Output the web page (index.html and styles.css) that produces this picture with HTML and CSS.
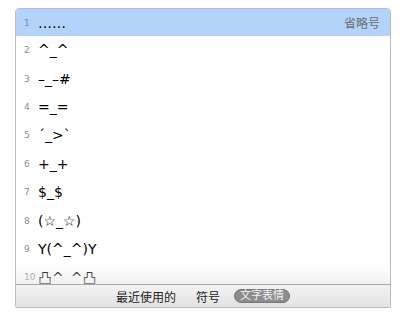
FILE: index.html
```html
<!DOCTYPE html>
<html>

<head>
  <title>文字表情</title>
  <link rel="stylesheet" href="styles.css">
</head>

<body>
  <div class="panel">
    <!-- emoticon list -->
    <ul class="list">
      <li class="row selected"><span class="num">1</span><span class="face">……</span><span class="note">省略号</span></li>
      <li class="row"><span class="num">2</span><span class="face">^_^</span></li>
      <li class="row"><span class="num">3</span><span class="face">–_–#</span></li>
      <li class="row"><span class="num">4</span><span class="face">=_=</span></li>
      <li class="row"><span class="num">5</span><span class="face">´_&gt;`</span></li>
      <li class="row"><span class="num">6</span><span class="face">+_+</span></li>
      <li class="row"><span class="num">7</span><span class="face">$_$</span></li>
      <li class="row"><span class="num">8</span><span class="face">(☆_☆)</span></li>
      <li class="row"><span class="num">9</span><span class="face">Y(^_^)Y</span></li>
      <li class="row"><span class="num">10</span><span class="face">凸^_^凸</span></li>
    </ul>
    <div class="fade"></div>

    <!-- tabs -->
    <div class="tabs">
      <span class="tab">最近使用的</span>
      <span class="tab">符号</span>
      <span class="tab active">文字表情</span>
    </div>
  </div>
</body>

</html>
```

FILE: styles.css
```css
* {
  margin: 0;
  padding: 0;
  box-sizing: border-box;
}

body {
  font-family: "DejaVu Sans", "Noto Sans CJK SC", sans-serif;
  background-color: white;
  padding: 8px 15px 0 15px;
}

.panel {
  position: relative;
  width: 376px;
  height: 300px;
  border: 1px solid #bcbcbc;
  border-radius: 4px 4px 2px 2px;
  background-color: white;
  overflow: hidden;
  display: flex;
  flex-direction: column;
}

.list {
  list-style: none;
  flex: 1;
  overflow: hidden;
}

.row {
  display: flex;
  align-items: center;
  height: 28.4px;
  padding: 0 10px 0 8px;
}

.row.selected {
  height: 27px;
  background-color: #b3d3fb;
}

.num {
  width: 14px;
  font-size: 9px;
  color: #8c8c8c;
}

.face {
  font-size: 14px;
  color: #000;
}

.note {
  margin-left: auto;
  font-size: 12px;
  color: #6e6e6e;
}

.fade {
  position: absolute;
  left: 0;
  right: 0;
  bottom: 23px;
  height: 20px;
  background: linear-gradient(rgba(255, 255, 255, 0), rgba(232, 232, 232, 0.6));
}

.tabs {
  height: 23px;
  border-top: 1px solid #a9a9a9;
  background: linear-gradient(#f3f3f3, #e3e3e3);
  display: flex;
  justify-content: center;
  align-items: center;
  gap: 20px;
  font-size: 12px;
  color: #222;
}

.tab.active {
  background-color: #8c8c8c;
  border: 1px solid #767676;
  color: #f4f4f4;
  border-radius: 7px;
  padding: 0 5px;
  font-size: 11px;
  line-height: 12px;
  margin-left: -6px;
}
```
